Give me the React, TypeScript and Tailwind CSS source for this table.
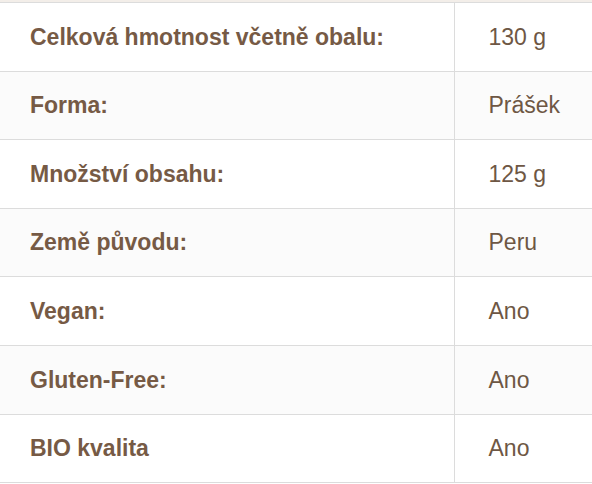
const rows = [
  { label: 'Celková hmotnost včetně obalu:', value: '130 g' },
  { label: 'Forma:', value: 'Prášek' },
  { label: 'Množství obsahu:', value: '125 g' },
  { label: 'Země původu:', value: 'Peru' },
  { label: 'Vegan:', value: 'Ano' },
  { label: 'Gluten-Free:', value: 'Ano' },
  { label: 'BIO kvalita', value: 'Ano' },
];

export default function App() {
  return (
    <div className="w-[592px] h-[484px] bg-white overflow-hidden font-['Liberation_Sans',Arial,sans-serif]">
      <div className="h-[2px] bg-[#f3eee9]" />
      <table className="w-full border-collapse border-t border-[#dcdcdc] text-[23px] text-[#765a45]">
        <tbody>
          {rows.map((row, i) => (
            <tr
              key={row.label}
              className={`h-[68.6px] border-b border-[#dcdcdc] ${i % 2 === 1 ? 'bg-[#fbfbfb]' : 'bg-white'}`}
            >
              <td className="w-[454px] pl-[30px] font-bold border-r border-[#dcdcdc] align-middle">
                {row.label}
              </td>
              <td className="pl-[34px] align-middle text-[#6e5744]">{row.value}</td>
            </tr>
          ))}
        </tbody>
      </table>
    </div>
  );
}
